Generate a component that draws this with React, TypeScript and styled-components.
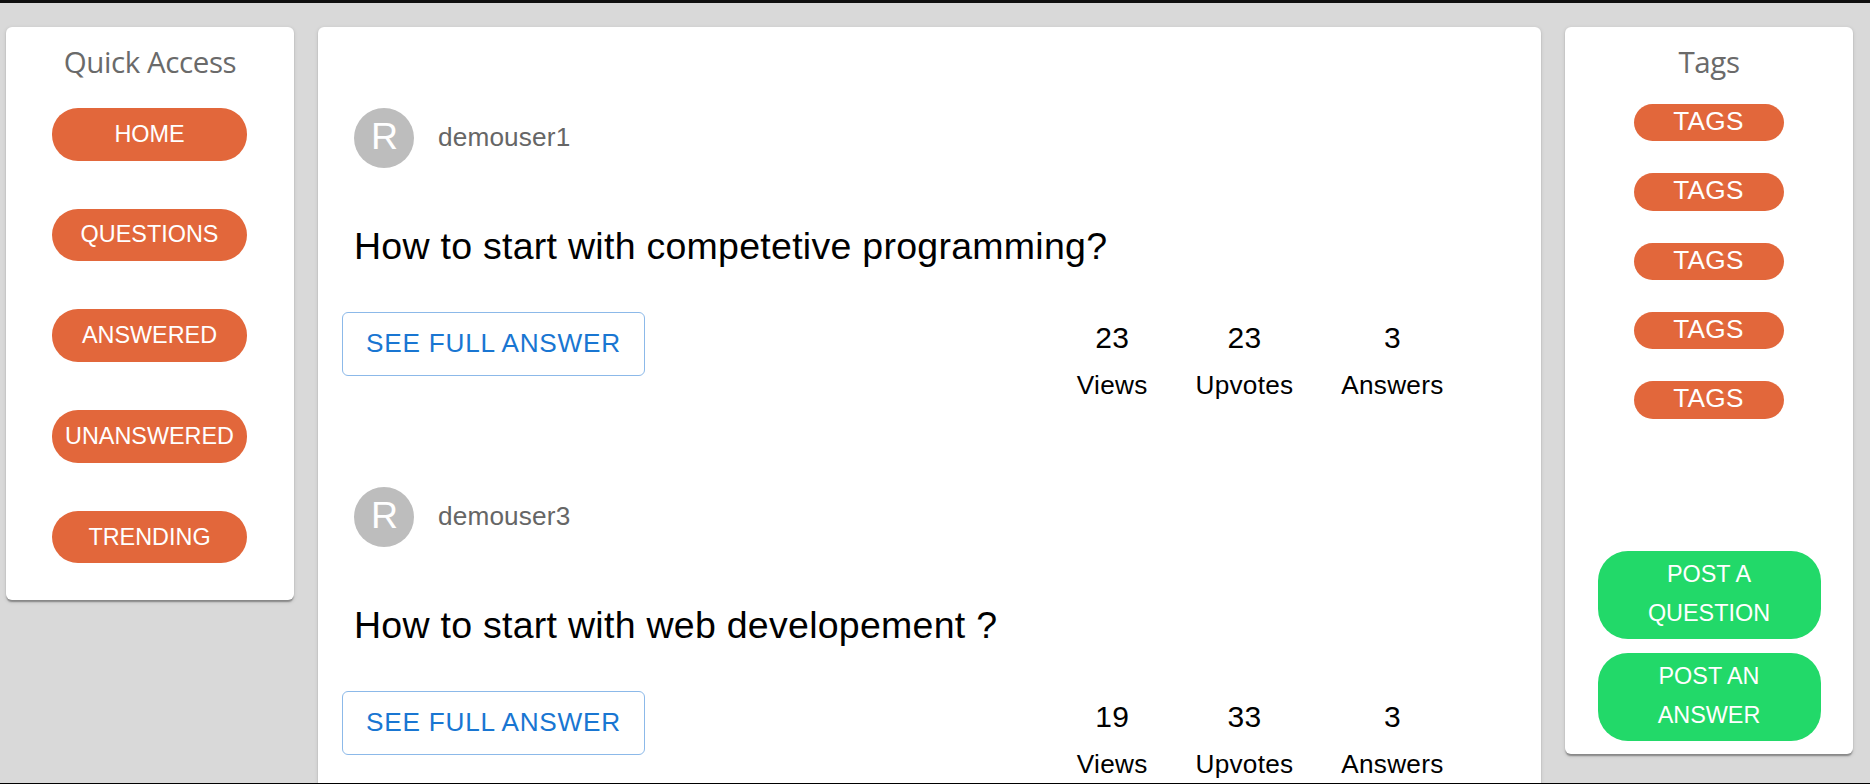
import React from "react";
import styled, { createGlobalStyle } from "styled-components";

const GlobalStyle = createGlobalStyle`
  *, *::before, *::after { box-sizing: border-box; }
  body {
    margin: 0;
    font-family: "Liberation Sans", Arial, sans-serif;
    background: #d9d9d9;
  }
`;

const Page = styled.div`
  display: flex;
  align-items: flex-start;
  gap: 24px;
  height: 784px;
  padding: 24px 17px 0 6px;
  overflow: hidden;
  background: #d9d9d9;
  border-top: 3px solid #0f0f0f;
  border-bottom: 1px solid #000;
`;

const Card = styled.section`
  background: #fff;
  border-radius: 6px;
  box-shadow: 0 3px 1.5px -1.5px rgba(0, 0, 0, 0.2),
    0 1.5px 1.5px rgba(0, 0, 0, 0.14), 0 1.5px 4.5px rgba(0, 0, 0, 0.12);
`;

const SideCard = styled(Card)<{ $height: number }>`
  display: flex;
  flex-direction: column;
  align-items: center;
  flex: 0 0 288px;
  height: ${(p) => p.$height}px;
  padding-top: 15px;
`;

const Feed = styled(Card)`
  flex: 1;
  height: 900px;
  padding: 81px 97.5px 0 24px;
`;

const SideTitle = styled.h2`
  margin: 0;
  font: 400 29.5px/40px "Open Sans", "Noto Sans", sans-serif;
  letter-spacing: -0.4px;
  color: #6a6a6a;
`;

const NavList = styled.nav`
  display: flex;
  flex-direction: column;
  gap: 48.1px;
  margin-top: 26px;
  padding-right: 1px;
`;

const NavButton = styled.button`
  width: 195px;
  height: 52.6px;
  padding: 0;
  border: 0;
  border-radius: 26px;
  background: #e2673b;
  color: #fff;
  font: 400 23.4px/39px "Liberation Sans", Arial, sans-serif;
  text-transform: uppercase;
`;

const TagList = styled.div`
  display: flex;
  flex-direction: column;
  gap: 31.9px;
  margin-top: 22px;
`;

const Tag = styled.button`
  width: 150px;
  height: 37.4px;
  padding: 0 1px 2px 0;
  border: 0;
  border-radius: 19px;
  background: #e2673b;
  color: #fff;
  font: 400 26.2px/35px "Liberation Sans", Arial, sans-serif;
  letter-spacing: 0.25px;
  text-transform: uppercase;
`;

const Actions = styled.div`
  display: flex;
  flex-direction: column;
  gap: 14px;
  margin-top: auto;
  margin-bottom: 13px;
`;

const ActionButton = styled.button`
  width: 223px;
  height: 88px;
  padding: 4px 48px 6px;
  border: 0;
  border-radius: 30px;
  background: #22d969;
  color: #fff;
  font: 400 23.4px/39px "Liberation Sans", Arial, sans-serif;
  text-transform: uppercase;
`;

const Post = styled.article`
  height: 379px;
`;

const Author = styled.header`
  display: flex;
  align-items: center;
  gap: 24px;
  height: 60px;
  margin-left: 12px;
`;

const Avatar = styled.div`
  display: flex;
  align-items: center;
  justify-content: center;
  width: 60px;
  height: 60px;
  padding: 0 0 2px 1px;
  border-radius: 50%;
  background: #bdbdbd;
  color: #fff;
  font-size: 37.5px;
  line-height: 1;
`;

const UserName = styled.span`
  padding-bottom: 2px;
  font-size: 26.2px;
  line-height: 36px;
  letter-spacing: 0.15px;
  color: #666;
`;

const Question = styled.h3`
  margin: 50px 0 0 12px;
  font-size: 37.5px;
  font-weight: 400;
  line-height: 56px;
  letter-spacing: 0.27px;
  color: #000;
`;

const PostFooter = styled.footer`
  display: flex;
  align-items: flex-start;
  justify-content: space-between;
  margin-top: 38px;
`;

const AnswerButton = styled.button`
  width: 303px;
  height: 64px;
  padding: 0 0 2px;
  border: 1px solid #8cb9e9;
  border-radius: 6px;
  background: #fff;
  color: #1976d2;
  font: 400 26.2px/46px "Liberation Sans", Arial, sans-serif;
  letter-spacing: 0.75px;
  text-transform: uppercase;
`;

const Stats = styled.div`
  display: flex;
  gap: 48px;
  margin-top: 8px;
`;

const Stat = styled.div`
  display: flex;
  flex-direction: column;
  align-items: center;
  gap: 12px;
  color: #000;
  letter-spacing: 0.25px;
`;

const StatValue = styled.span`
  font-size: 30px;
  line-height: 35px;
`;

const StatLabel = styled.span`
  font-size: 26.2px;
  line-height: 36px;
`;

const navItems = ["Home", "Questions", "Answered", "Unanswered", "Trending"];
const tags = ["Tags", "Tags", "Tags", "Tags", "Tags"];
const actions = ["Post a question", "Post an answer"];

const posts = [
  {
    user: "demouser1",
    question: "How to start with competetive programming?",
    stats: { Views: 23, Upvotes: 23, Answers: 3 },
  },
  {
    user: "demouser3",
    question: "How to start with web developement ?",
    stats: { Views: 19, Upvotes: 33, Answers: 3 },
  },
];

export default function App() {
  return (
    <>
      <GlobalStyle />
      <Page>
        <SideCard $height={573}>
          <SideTitle>Quick Access</SideTitle>
          <NavList>
            {navItems.map((item) => (
              <NavButton key={item}>{item}</NavButton>
            ))}
          </NavList>
        </SideCard>

        <Feed>
          {posts.map((post) => (
            <Post key={post.user}>
              <Author>
                <Avatar>R</Avatar>
                <UserName>{post.user}</UserName>
              </Author>
              <Question>{post.question}</Question>
              <PostFooter>
                <AnswerButton>See full answer</AnswerButton>
                <Stats>
                  {Object.entries(post.stats).map(([label, value]) => (
                    <Stat key={label}>
                      <StatValue>{value}</StatValue>
                      <StatLabel>{label}</StatLabel>
                    </Stat>
                  ))}
                </Stats>
              </PostFooter>
            </Post>
          ))}
        </Feed>

        <SideCard $height={727}>
          <SideTitle>Tags</SideTitle>
          <TagList>
            {tags.map((tag, i) => (
              <Tag key={i}>{tag}</Tag>
            ))}
          </TagList>
          <Actions>
            {actions.map((action) => (
              <ActionButton key={action}>{action}</ActionButton>
            ))}
          </Actions>
        </SideCard>
      </Page>
    </>
  );
}
